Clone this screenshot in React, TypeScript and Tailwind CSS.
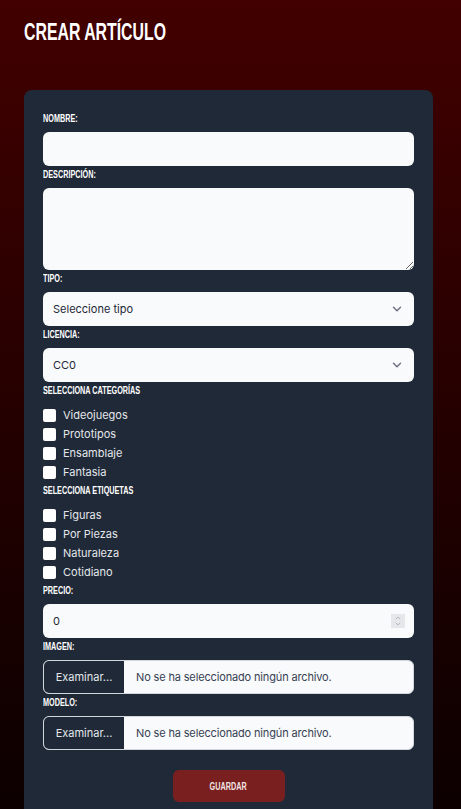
import { ChevronDown, ChevronUp } from "lucide-react";

// condensed display look: bold sans squeezed horizontally
const heading = "font-['Liberation_Sans',sans-serif] font-bold uppercase";
const body = "font-['Inter','Liberation_Sans',sans-serif]";

const categorias = ["Videojuegos", "Prototipos", "Ensamblaje", "Fantasia"];
const etiquetas = ["Figuras", "Por Piezas", "Naturaleza", "Cotidiano"];

const Narrow = ({ children, center }: { children: React.ReactNode; center?: boolean }) => (
  <span className={`inline-block whitespace-nowrap scale-x-[0.66] ${center ? "origin-center" : "origin-left"}`}>
    {children}
  </span>
);

const Label = ({ children }: { children: React.ReactNode }) => (
  <label className={`${heading} block text-[11px] leading-4 mb-1.5 text-white`}>
    <Narrow>{children}</Narrow>
  </label>
);

const CheckRow = ({ text }: { text: string }) => (
  <div className="flex items-center h-[19px] gap-[7px]">
    <span className="w-[13px] h-[13px] bg-white rounded-[2px]" />
    <span className={`${body} text-[11px] text-gray-200`}>{text}</span>
  </div>
);

const SelectBox = ({ value }: { value: string }) => (
  <div className="relative">
    <select
      defaultValue={value}
      className={`${body} appearance-none w-full h-[34px] rounded-md bg-gray-50 px-2.5 text-[11px] text-gray-800 outline-none`}
    >
      <option>{value}</option>
    </select>
    <ChevronDown
      className="absolute right-[10px] top-1/2 -translate-y-1/2 w-3.5 h-3.5 text-gray-500 pointer-events-none"
      strokeWidth={2.5}
    />
  </div>
);

const FileBox = () => (
  <div className={`${body} flex h-[34px] rounded-md border border-gray-300 bg-gray-50 overflow-hidden text-[11px]`}>
    <div className="w-[80px] bg-[#1f2937] text-gray-200 flex items-center justify-center">
      Examinar...
    </div>
    <div className="flex items-center pl-3 text-gray-700 tracking-[-0.15px]">
      No se ha seleccionado ningún archivo.
    </div>
  </div>
);

export default function App() {
  return (
    <div className="min-h-screen bg-gradient-to-b from-[#420000] to-[#0a0000] pl-6 pr-7 pt-[18px] pb-6">
      <h1 className={`${heading} text-[24px] leading-7 text-white`}>
        <Narrow>Crear Artículo</Narrow>
      </h1>

      <form className="mt-[44px] bg-[#1f2937] rounded-lg px-[19px] pt-5 pb-6">
        <Label>Nombre:</Label>
        <input className="block w-full h-[34px] rounded-md bg-gray-50 outline-none" />

        <Label>Descripción:</Label>
        <textarea className="block w-full h-[82px] rounded-md bg-gray-50 outline-none" />

        <Label>Tipo:</Label>
        <SelectBox value="Seleccione tipo" />

        <Label>Licencia:</Label>
        <SelectBox value="CC0" />

        <p className={`${heading} text-[11px] leading-4 mb-2 text-white`}>
          <Narrow>Selecciona categorías</Narrow>
        </p>
        {categorias.map((c) => (
          <CheckRow key={c} text={c} />
        ))}

        <p className={`${heading} text-[11px] leading-4 mb-2 text-white`}>
          <Narrow>Selecciona etiquetas</Narrow>
        </p>
        {etiquetas.map((c) => (
          <CheckRow key={c} text={c} />
        ))}

        <Label>Precio:</Label>
        <div className={`${body} flex items-center justify-between h-[34px] rounded-md bg-gray-50 pl-2.5 pr-[9px] text-[11px] text-gray-800`}>
          <span>0</span>
          <span className="flex flex-col items-center justify-center w-[14px] h-[14px] bg-gray-200 text-gray-400">
            <ChevronUp className="w-2 h-2 -mb-[1px]" strokeWidth={2} />
            <ChevronDown className="w-2 h-2 -mt-[1px]" strokeWidth={2} />
          </span>
        </div>

        <Label>Imagen:</Label>
        <FileBox />

        <Label>Modelo:</Label>
        <FileBox />

        <div className="flex justify-center mt-5">
          <button
            type="button"
            className={`${heading} w-[112px] h-8 rounded-md bg-[#7a1f1f] text-[11px] text-[#f3e4e4]`}
          >
            <Narrow center>Guardar</Narrow>
          </button>
        </div>
      </form>
    </div>
  );
}
